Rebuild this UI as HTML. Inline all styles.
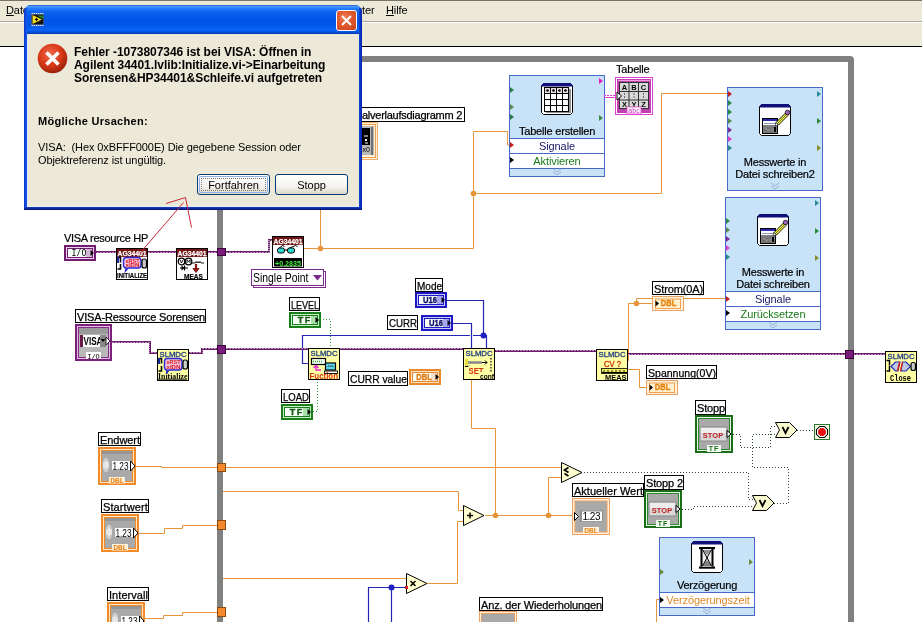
<!DOCTYPE html>
<html><head><meta charset="utf-8">
<style>
*{margin:0;padding:0;box-sizing:border-box}
html,body{width:922px;height:623px;overflow:hidden;background:#fff}
body{position:relative;will-change:transform;font-family:"Liberation Sans",sans-serif;font-size:11px;color:#000}
.a{position:absolute}
#menu{left:0;top:0;width:922px;height:22px;background:#ECE9D8;border-top:1px solid #77756a}
#menu span{position:absolute;top:3px;font-size:11px;letter-spacing:-0.1px}
#tool{left:0;top:22px;width:922px;height:25px;background:#ECE9D8;border-top:1px solid #fff;border-bottom:1px solid #000}
#tool:before{content:"";position:absolute;left:0;top:-2px;width:922px;height:1px;background:#aca899}
.lbl{position:absolute;background:#fff;border:1px solid #000;font-size:11px;line-height:12px;padding:0 1px;white-space:nowrap;letter-spacing:-0.2px;-webkit-text-stroke:0.25px #000}
.nlbl{position:absolute;font-size:11px;line-height:12px;white-space:nowrap;letter-spacing:-0.2px;-webkit-text-stroke:0.2px currentColor}
svg{position:absolute;left:0;top:0}
</style></head><body>
<div id="menu" class="a"><span style="left:6px"><u>D</u>atei</span><span style="left:338px">Fenster</span><span style="left:386px"><u>H</u>ilfe</span></div>
<div id="tool" class="a"></div>

<!-- diagram svg: loop + wires -->
<svg width="922" height="623" viewBox="0 0 922 623">
  <defs>
    <pattern id="vw" width="3" height="2" patternUnits="userSpaceOnUse"><rect x="0" y="0" width="1" height="1" fill="#6a1a6a"/><rect x="0" y="1" width="3" height="1" fill="#6a1a6a"/><rect x="1" y="0" width="2" height="1" fill="#b890b8"/></pattern>
  </defs>
  <path d="M217 622 V59 Q217 56 220 56 H850 Q854 56 854 60 V622 H848 V62 H223 V622 Z" fill="#808080"/>
  <g fill="none" stroke="#e8943a" stroke-width="1">
    <path d="M304 248.5 H473.5 M320.5 248.5 V200"/>
    <path d="M473.5 248.5 V131.5 H507.5 V145 H512"/>
    <path d="M473.5 193.5 H661.5 V93.5 H727"/>
    <path d="M628.5 361 V303.5 H652 M636.5 303.5 V298.5 H726"/>
    <path d="M628 369.5 H639.5 V387.5 H647"/>
    <path d="M136 466.5 H161.5 V467.5 H217 M223 467.5 H561"/>
    <path d="M139 533.5 H164.5 V528.5 H182.5 V525.5 H217"/>
    <path d="M223 491.5 H458.5 V510.5 H464"/>
    <path d="M144 618.5 H163.5 V615.5 H182.5 V612.5 H217"/>
    <path d="M223 578.5 H407"/>
    <path d="M427 583.5 H457.5 V521.5 H464"/>
    <path d="M485 515.5 H575"/>
    <path d="M495.5 515.5 V428.5 H471.5 V380"/>
    <path d="M548.5 515.5 V477.5 H562"/>
    <path d="M656.5 623 V599.5 H661"/>
  </g>
  <g fill="#e8943a">
    <circle cx="320.5" cy="248.5" r="2.8"/><circle cx="473.5" cy="193.5" r="2.8"/><circle cx="636.5" cy="303.5" r="2.8"/>
    <circle cx="495.5" cy="515.5" r="2.8"/><circle cx="548.5" cy="515.5" r="2.8"/>
  </g>
  <g fill="none" stroke="#2525b5" stroke-width="1.2">
    <path d="M447 300.5 H483.5 V335.5 H486.5 V348"/>
    <path d="M453 323.5 H471.5 V348"/>
    <path d="M483.5 335.5 H473 M470 335.5 H302.5 V363.5 H308"/>
    <path d="M368.5 623 V587.5 H407 M391.5 587.5 V623"/>
  </g>
  <g fill="#2020c0"><circle cx="483.5" cy="335.5" r="3"/><circle cx="391.5" cy="587.5" r="3"/></g>
  <g fill="none" stroke="#2a4a2a" stroke-width="1" stroke-dasharray="1 2">
    <path d="M581 472.5 H748.5 V499.5 H754"/>
    <path d="M682 509.5 H693.5 V506.5 H754"/>
    <path d="M733 434.5 H740.5 V447.5 H770.5 V426.5 H777"/>
    <path d="M774 503.5 H788.5 V467.5 H752.5 V434.5 H777"/>
    <path d="M797 430.5 H814"/>
  </g>
  <g fill="none" stroke="#30a030" stroke-width="1" stroke-dasharray="1 2"><path d="M320 319.5 H330.5 V348"/><path d="M313 411.5 H317.5 V380"/></g>
  <g fill="url(#vw)">
    <rect x="96" y="251" width="20" height="2"/><rect x="148" y="251" width="28" height="2"/><rect x="208" y="251" width="10" height="2"/>
    <rect x="226" y="251" width="43" height="2"/><rect x="268" y="239" width="2" height="14"/><rect x="268" y="239" width="4" height="2"/>
    <rect x="112" y="341" width="39" height="2"/><rect x="149" y="341" width="2" height="13"/><rect x="149" y="352" width="8" height="2"/>
    <rect x="189" y="352" width="14" height="2"/><rect x="201" y="348" width="2" height="6"/><rect x="201" y="348" width="17" height="2"/>
    <rect x="226" y="348" width="82" height="2"/><rect x="340" y="348" width="124" height="2"/><rect x="495" y="350" width="101" height="2"/>
    <rect x="628" y="353" width="217" height="2"/><rect x="854" y="353" width="31" height="2"/>
  </g>
  <!-- tunnels -->
  <g fill="#7a1a7a" stroke="#3a003a" stroke-width="1">
    <rect x="217.5" y="248.5" width="8" height="7"/><rect x="217.5" y="345.5" width="8" height="8"/><rect x="845.5" y="350.5" width="8" height="8"/>
  </g>
  <g fill="#f5892a" stroke="#8a4a10" stroke-width="1">
    <rect x="217.5" y="463.5" width="8" height="8"/><rect x="217.5" y="520.5" width="8" height="9"/><rect x="217.5" y="607.5" width="8" height="9"/>
  </g>
</svg>
<div class="nlbl" style="left:64px;top:232px;letter-spacing:-0.294px;font-size:11px;color:#000">VISA resource HP</div>
<svg class="a" style="left:64px;top:245px" width="32" height="16" viewBox="0 0 32 16"><rect x="0" y="0" width="32" height="16" fill="#701c70"/>
<rect x="2.5" y="2.5" width="27" height="11" fill="none" stroke="#f0d0f0"/>
<rect x="4" y="4" width="24" height="8" fill="#f8fff8"/>
<rect x="22" y="4" width="6" height="8" fill="#d8b8d8"/>
<text x="15.0" y="11.2" text-anchor="middle" font-family="Liberation Mono" font-size="10" fill="#000" textLength="15" lengthAdjust="spacingAndGlyphs">I/O</text><path d="M26.5 5.0 L30 8.0 L26.5 11.0 Z" fill="#000"/></svg>
<svg class="a" style="left:116px;top:248px" width="32" height="32" viewBox="0 0 32 32"><rect x="0.5" y="0.5" width="31" height="31" fill="#fff" stroke="#000"/><rect x="1" y="1" width="30" height="8" fill="#701414"/><text x="1.5" y="8" font-family="Liberation Sans" font-weight="bold" font-size="8" fill="#fff" stroke="#fff" stroke-width="0.25" textLength="29" lengthAdjust="spacingAndGlyphs">AG34401</text><path d="M1.5 9.5 h3 v5 M1.5 21 h3 v-5" stroke="#000" stroke-width="1.6" fill="none"/><rect x="1" y="9" width="2" height="6" fill="#1a2aa0"/>
<path d="M10 9.5 H22 Q25 9.5 25 12.5 V17 Q25 20 22 20 H12 L9.5 23 L10 20 Q7.5 20 7.5 17 V12.5 Q7.5 9.5 10 9.5 Z" fill="#f0c0e0" stroke="#2a2ad0" stroke-width="1.4"/>
<text x="16.5" y="14.5" text-anchor="middle" font-family="Liberation Sans" font-weight="bold" font-size="5.5" fill="#e02020" textLength="14" lengthAdjust="spacingAndGlyphs">xRST</text>
<text x="16.5" y="19.3" text-anchor="middle" font-family="Liberation Sans" font-weight="bold" font-size="5.5" fill="#e02020" textLength="14" lengthAdjust="spacingAndGlyphs">xIDN</text>
<rect x="26" y="11" width="4.5" height="9" rx="2" fill="#c8c8c8" stroke="#000" stroke-width="1.2"/>
<text x="1" y="30.3" font-family="Liberation Sans" font-weight="bold" font-size="8" fill="#000" stroke="#000" stroke-width="0.2" textLength="30" lengthAdjust="spacingAndGlyphs">INITIALIZE</text></svg>
<svg class="a" style="left:176px;top:248px" width="32" height="32" viewBox="0 0 32 32"><rect x="0.5" y="0.5" width="31" height="31" fill="#fff" stroke="#000"/><rect x="1" y="1" width="30" height="8" fill="#701414"/><text x="1.5" y="8" font-family="Liberation Sans" font-weight="bold" font-size="8" fill="#fff" stroke="#fff" stroke-width="0.25" textLength="29" lengthAdjust="spacingAndGlyphs">AG34401</text><circle cx="5.5" cy="13.5" r="3.3" fill="none" stroke="#000" stroke-width="1.3"/><circle cx="12.5" cy="13.5" r="3.3" fill="none" stroke="#000" stroke-width="1.3"/>
<path d="M4 11.8 L5.5 15 L7 11.8 M11 15 v-3.2 l1.5 1.8 l1.5-1.8 v3.2" stroke="#000" fill="none" stroke-width="0.9"/>
<path d="M16 15 h3 l1-1.5 l1 1.5 l1-1.5 l1 1.5 l1 -1.5 l1 1.5 h3" stroke="#000" fill="none" stroke-width="0.9"/>
<path d="M4 20 h8 M8.5 17.5 v5" stroke="#000" stroke-width="1.2"/><path d="M5.5 17.5 L8.5 20 L5.5 22.5 Z" fill="#000"/>
<path d="M20 16 v5" stroke="#8a1010" stroke-width="2.2"/><path d="M17 20.5 h6 l-3 4 Z" fill="#a01818" stroke="#600" stroke-width="0.8"/>
<text x="8" y="30.5" font-family="Liberation Sans" font-weight="bold" font-size="8" fill="#000" stroke="#000" stroke-width="0.2" textLength="19" lengthAdjust="spacingAndGlyphs">MEAS</text></svg>
<svg class="a" style="left:272px;top:236px" width="32" height="32" viewBox="0 0 32 32"><rect x="0.5" y="0.5" width="31" height="31" fill="#fff" stroke="#000"/><rect x="1" y="1" width="30" height="8" fill="#701414"/><text x="1.5" y="8" font-family="Liberation Sans" font-weight="bold" font-size="8" fill="#fff" stroke="#fff" stroke-width="0.25" textLength="29" lengthAdjust="spacingAndGlyphs">AG34401</text><path d="M6.5 12.5 L10.5 9.5 L12.5 10.5 M16.5 12.5 L23.5 9.5 L25.5 10.5" stroke="#000" stroke-width="1" fill="none"/>
<rect x="5.5" y="12" width="7" height="5" rx="2" fill="#30d8d0" stroke="#000" stroke-width="1"/><rect x="15.5" y="12" width="7" height="5" rx="2" fill="#30d8d0" stroke="#000" stroke-width="1"/><path d="M12.5 14 h3" stroke="#000"/>
<rect x="2" y="22" width="28" height="8.5" fill="#000"/>
<text x="3" y="29.5" font-family="Liberation Sans" font-weight="bold" font-size="8" fill="#40f040" textLength="26" lengthAdjust="spacingAndGlyphs">+0.2835</text></svg>
<div class="a" style="left:253px;top:271px;width:73px;height:17px;background:#fff;border:1px solid #7a2a8a"></div>
<div class="a" style="left:251px;top:269px;width:73px;height:17px;background:#fff;border:1px solid #7a2a8a;font-size:12px;line-height:17px;padding-left:1px"><span style="display:inline-block;transform:scaleX(0.8668);transform-origin:0 0">Single Point</span></div>
<svg class="a" style="left:313px;top:275px" width="9" height="6" viewBox="0 0 9 6"><path d="M0 0 H9 L4.5 5.5 Z" fill="#7a2a8a"/></svg>
<div class="lbl" style="left:75px;top:309px;width:131px;height:14px;padding-top:1px;font-size:11px;letter-spacing:-0.154px"><span style="">VISA-Ressource Sorensen</span></div>
<svg class="a" style="left:75px;top:324px" width="37" height="37" viewBox="0 0 37 37"><rect x="0" y="0" width="37" height="37" fill="#7a1f7a"/><rect x="2.5" y="2.5" width="32" height="32" fill="none" stroke="#e0c0e0"/><rect x="3" y="3" width="31" height="31" fill="#8a2a8a"/><rect x="4" y="4" width="29" height="29" fill="#b8b8b8"/><rect x="4" y="4" width="29" height="6" fill="#9a9a9a"/>
<rect x="5" y="11" width="24" height="12" fill="#fff"/><rect x="5" y="11" width="3" height="12" fill="#6a1a4a"/><text x="8.5" y="21" font-family="Liberation Sans" font-weight="bold" font-size="10" fill="#000" textLength="19" lengthAdjust="spacingAndGlyphs">VISA</text>
<rect x="25" y="11" width="6" height="12" fill="#888"/><path d="M25.5 15 h5 l-2.5 3 Z" fill="#000"/><path d="M31 13 L35 17 L31 21 Z" fill="#fff" stroke="#000" stroke-width="0.8"/>
<rect x="11" y="28" width="15" height="7" fill="#fff"/><text x="18.5" y="34.5" text-anchor="middle" font-family="Liberation Mono" font-size="7" fill="#000">I/O</text></svg>
<svg class="a" style="left:157px;top:349px" width="32" height="32" viewBox="0 0 32 32"><rect x="0.5" y="0.5" width="31" height="31" fill="#ffffa6" stroke="#000"/><text x="2.5" y="8" font-family="Liberation Sans" font-size="8" fill="#1a3a80" stroke="#1a3a80" stroke-width="0.3" textLength="27" lengthAdjust="spacingAndGlyphs">SLMDC</text><path d="M1.5 9.5 h3 v5 M1.5 22 h3 v-5" stroke="#000" stroke-width="1.6" fill="none"/><rect x="1" y="9" width="2" height="6" fill="#1a2aa0"/>
<path d="M10 9.5 H22 Q25 9.5 25 12.5 V18 Q25 21 22 21 H12 L9.5 24.5 L10 21 Q7.5 21 7.5 18 V12.5 Q7.5 9.5 10 9.5 Z" fill="#f0c0e0" stroke="#2a2ad0" stroke-width="1.4"/>
<text x="16.5" y="15" text-anchor="middle" font-family="Liberation Sans" font-weight="bold" font-size="5.5" fill="#e02020" textLength="14" lengthAdjust="spacingAndGlyphs">xRST</text>
<text x="16.5" y="20" text-anchor="middle" font-family="Liberation Sans" font-weight="bold" font-size="5.5" fill="#e02020" textLength="14" lengthAdjust="spacingAndGlyphs">xIDN</text>
<rect x="26" y="11" width="4.5" height="9" rx="2" fill="#c8d8c8" stroke="#000" stroke-width="1.2"/>
<text x="1" y="29.8" font-family="Liberation Serif" font-weight="bold" font-size="8.5" fill="#000" textLength="29.5" lengthAdjust="spacingAndGlyphs">Initialize</text><path d="M1 30.5 H30" stroke="#000" stroke-width="0.6"/></svg>
<div class="lbl" style="left:289px;top:297px;width:31px;height:14px;padding-top:1px;font-size:11px;letter-spacing:0"><span style="display:inline-block;transform:scaleX(0.8168);transform-origin:0 0">LEVEL</span></div>
<svg class="a" style="left:289px;top:312px" width="32" height="16" viewBox="0 0 32 16"><rect x="0" y="0" width="32" height="16" fill="#1a7e1a"/>
<rect x="2.5" y="2.5" width="27" height="11" fill="none" stroke="#c8f0c8"/>
<rect x="4" y="4" width="24" height="8" fill="#f8fff8"/>
<rect x="22" y="4" width="6" height="8" fill="#a8e0a8"/>
<text x="15.0" y="11.2" text-anchor="middle" font-family="Liberation Sans" font-weight="bold" font-size="9" fill="#145a14" stroke="#145a14" stroke-width="0.35" textLength="12.5" lengthAdjust="spacing">TF</text><path d="M26.5 5.0 L30 8.0 L26.5 11.0 Z" fill="#000"/></svg>
<div class="lbl" style="left:281px;top:389px;width:29px;height:14px;padding-top:1px;font-size:11px;letter-spacing:0"><span style="display:inline-block;transform:scaleX(0.8676);transform-origin:0 0">LOAD</span></div>
<svg class="a" style="left:281px;top:404px" width="32" height="16" viewBox="0 0 32 16"><rect x="0" y="0" width="32" height="16" fill="#1a7e1a"/>
<rect x="2.5" y="2.5" width="27" height="11" fill="none" stroke="#c8f0c8"/>
<rect x="4" y="4" width="24" height="8" fill="#f8fff8"/>
<rect x="22" y="4" width="6" height="8" fill="#a8e0a8"/>
<text x="15.0" y="11.2" text-anchor="middle" font-family="Liberation Sans" font-weight="bold" font-size="9" fill="#145a14" stroke="#145a14" stroke-width="0.35" textLength="12.5" lengthAdjust="spacing">TF</text><path d="M26.5 5.0 L30 8.0 L26.5 11.0 Z" fill="#000"/></svg>
<svg class="a" style="left:308px;top:348px" width="32" height="32" viewBox="0 0 32 32"><rect x="0.5" y="0.5" width="31" height="31" fill="#ffffa6" stroke="#000"/><text x="2.5" y="8" font-family="Liberation Sans" font-size="8" fill="#1a3a80" stroke="#1a3a80" stroke-width="0.3" textLength="27" lengthAdjust="spacingAndGlyphs">SLMDC</text><rect x="3.5" y="10.5" width="14" height="6" fill="#f4fff4" stroke="#000" stroke-width="1.2"/><path d="M5 13.5 h10" stroke="#30b030" stroke-width="1.5" stroke-dasharray="1 1"/>
<path d="M8 18 v4 h5" stroke="#e020d0" stroke-width="1.3" fill="none"/><path d="M5.5 20 L8 17.5 L10.5 20" stroke="#e020d0" stroke-width="1.3" fill="none"/>
<rect x="17.5" y="15" width="10" height="7" fill="#60d8f0" stroke="#000" stroke-width="1.2"/><path d="M19.5 19 l1.5-1.5 l1.5 1.5 l1.5-1.5 l1.5 1.5" stroke="#000" fill="none" stroke-width="0.7"/><rect x="16.5" y="23" width="13" height="2.5" fill="#fff" stroke="#000" stroke-width="0.9"/>
<text x="1.5" y="30.5" font-family="Liberation Sans" font-weight="bold" font-size="8.5" fill="#e03010" textLength="28.5" lengthAdjust="spacingAndGlyphs">Fuction</text></svg>
<div class="lbl" style="left:415px;top:278px;width:28px;height:14px;padding-top:1px;font-size:11px;letter-spacing:0"><span style="display:inline-block;transform:scaleX(0.9081);transform-origin:0 0">Mode</span></div>
<svg class="a" style="left:415px;top:292px" width="32" height="16" viewBox="0 0 32 16"><rect x="0" y="0" width="32" height="16" fill="#1a1ac0"/>
<rect x="2.5" y="2.5" width="27" height="11" fill="none" stroke="#c8c8ff"/>
<rect x="4" y="4" width="24" height="8" fill="#f8fff8"/>
<rect x="22" y="4" width="6" height="8" fill="#a8a8f0"/>
<text x="15.0" y="11.2" text-anchor="middle" font-family="Liberation Sans" font-weight="bold" font-size="9" fill="#10106a" stroke="#10106a" stroke-width="0.35" textLength="14" lengthAdjust="spacingAndGlyphs">U16</text><path d="M26.5 5.0 L30 8.0 L26.5 11.0 Z" fill="#000"/></svg>
<div class="lbl" style="left:387px;top:315px;width:31px;height:15px;padding-top:1px;font-size:11px;letter-spacing:0"><span style="display:inline-block;transform:scaleX(0.8819);transform-origin:0 0">CURR</span></div>
<svg class="a" style="left:421px;top:315px" width="32" height="16" viewBox="0 0 32 16"><rect x="0" y="0" width="32" height="16" fill="#1a1ac0"/>
<rect x="2.5" y="2.5" width="27" height="11" fill="none" stroke="#c8c8ff"/>
<rect x="4" y="4" width="24" height="8" fill="#f8fff8"/>
<rect x="22" y="4" width="6" height="8" fill="#a8a8f0"/>
<text x="15.0" y="11.2" text-anchor="middle" font-family="Liberation Sans" font-weight="bold" font-size="9" fill="#10106a" stroke="#10106a" stroke-width="0.35" textLength="14" lengthAdjust="spacingAndGlyphs">U16</text><path d="M26.5 5.0 L30 8.0 L26.5 11.0 Z" fill="#000"/></svg>
<div class="lbl" style="left:348px;top:371px;width:60px;height:15px;padding-top:1px;font-size:11px;letter-spacing:0"><span style="display:inline-block;transform:scaleX(0.9325);transform-origin:0 0">CURR value</span></div>
<svg class="a" style="left:409px;top:369px" width="32" height="16" viewBox="0 0 32 16"><rect x="0" y="0" width="32" height="16" fill="#e8892e"/>
<rect x="2.5" y="2.5" width="27" height="11" fill="none" stroke="#ffe0c0"/>
<rect x="4" y="4" width="24" height="8" fill="#f8fff8"/>
<rect x="22" y="4" width="6" height="8" fill="#f8e0c8"/>
<text x="15.0" y="11.2" text-anchor="middle" font-family="Liberation Sans" font-weight="bold" font-size="9" fill="#e07a10" stroke="#e07a10" stroke-width="0.35" textLength="15.5" lengthAdjust="spacingAndGlyphs">DBL</text><path d="M26.5 5.0 L30 8.0 L26.5 11.0 Z" fill="#000"/></svg>
<svg class="a" style="left:463px;top:348px" width="32" height="32" viewBox="0 0 32 32"><rect x="0.5" y="0.5" width="31" height="31" fill="#ffffa6" stroke="#000"/><text x="2.5" y="8" font-family="Liberation Sans" font-size="8" fill="#1a3a80" stroke="#1a3a80" stroke-width="0.3" textLength="27" lengthAdjust="spacingAndGlyphs">SLMDC</text><rect x="2" y="11" width="3" height="7" fill="#e8e040"/><path d="M2 18.5 h3 l1 -1" stroke="#000" fill="none"/><path d="M5 14.5 h14" stroke="#888" stroke-width="2.5"/><path d="M19 14.5 h5 M22 12.5 l2 2 l-2 2" stroke="#000" stroke-width="1" fill="none"/><path d="M28 10 v14" stroke="#000" stroke-width="1.2" stroke-dasharray="1.5 1.5"/>
<text x="5.5" y="26" font-family="Liberation Sans" font-weight="bold" font-size="9.5" fill="#d03010" textLength="15" lengthAdjust="spacingAndGlyphs">SET</text>
<rect x="17" y="24" width="14" height="7" fill="#ffffa6"/><text x="17" y="30.5" font-family="Liberation Sans" font-weight="bold" font-size="7.5" fill="#000" textLength="14" lengthAdjust="spacingAndGlyphs">conf</text></svg>
<div class="lbl" style="left:300px;top:107px;width:165px;height:15px;padding-top:1px;text-align:right;padding-right:2px;letter-spacing:-0.259px">Signalverlaufsdiagramm 2</div>
<svg class="a" style="left:340px;top:122px" width="38" height="38" viewBox="0 0 38 38"><rect x="0.5" y="0.5" width="37" height="37" fill="#fff0d8" stroke="#f0b070"/><rect x="2.5" y="2.5" width="33" height="33" fill="#fff0d8" stroke="#f0a050"/><rect x="4" y="4" width="30" height="29" fill="#b8b8b8"/><rect x="31" y="5" width="2" height="28" fill="#707070"/><rect x="4" y="6" width="26" height="17" fill="#000"/><path d="M24 14 h4 M25 17 l2 2 M27 17 l-2 2 M25 21 h3" stroke="#fff" stroke-width="1"/><text x="30" y="30" font-size="7" font-family="Liberation Sans" text-anchor="end" fill="#000">x0</text></svg>
<div class="a" style="left:509px;top:75px;width:96px;height:102px;background:#c8e2f8;border:1px solid #4a68c8"></div>
<div class="a" style="left:509px;top:138px;width:96px;height:16px;background:#fff;border:1px solid #4a68c8;text-align:center;font-size:11px;line-height:14px;color:#1a1a6a;letter-spacing:-0.1px">Signale</div>
<div class="a" style="left:509px;top:153px;width:96px;height:16px;background:#fff;border:1px solid #4a68c8;text-align:center;font-size:11px;line-height:14px;color:#1a7a1a;letter-spacing:-0.1px">Aktivieren</div>
<svg class="a" style="left:551px;top:168px" width="12" height="8" viewBox="0 0 12 8"><path d="M2 1 L6 4 L10 1 M2 4 L6 7 L10 4" stroke="#9ab0d0" fill="none"/></svg>
<svg class="a" style="left:510px;top:87px" width="4" height="6"><path d="M0 0 L4 3 L0 6 Z" fill="#2a7a4a"/></svg>
<svg class="a" style="left:510px;top:104px" width="4" height="6"><path d="M0 0 L4 3 L0 6 Z" fill="#5a8a4a"/></svg>
<svg class="a" style="left:510px;top:114px" width="4" height="6"><path d="M0 0 L4 3 L0 6 Z" fill="#2a7a4a"/></svg>
<svg class="a" style="left:510px;top:142px" width="4" height="6"><path d="M0 0 L4 3 L0 6 Z" fill="#c02020"/></svg>
<svg class="a" style="left:510px;top:157px" width="4" height="6"><path d="M0 0 L4 3 L0 6 Z" fill="#000"/></svg>
<svg class="a" style="left:599px;top:78px" width="4" height="6"><path d="M0 0 L4 3 L0 6 Z" fill="#e020c0"/></svg>
<svg class="a" style="left:599px;top:115px" width="4" height="6"><path d="M0 0 L4 3 L0 6 Z" fill="#3a8a3a"/></svg>
<svg class="a" style="left:541px;top:83px" width="32" height="32" viewBox="0 0 32 32"><path d="M2.5 0.5 H29.5 L31.5 2.5 V29.5 L29.5 31.5 H2.5 L0.5 29.5 V2.5 Z" fill="#fff" stroke="#000" stroke-width="1"/><path d="M2.5 0.5 H29.5 L31 2 V3 H1 V2 Z" fill="#10107a" stroke="#10107a"/><rect x="5" y="6" width="25" height="24" fill="#909090"/><rect x="3" y="4" width="25" height="25" fill="#000"/><rect x="4" y="5" width="5" height="5" fill="#ece4e4"/><rect x="10" y="5" width="5" height="5" fill="#ece4e4"/><rect x="16" y="5" width="5" height="5" fill="#ece4e4"/><rect x="22" y="5" width="5" height="5" fill="#ece4e4"/><rect x="4" y="11" width="5" height="5" fill="#fff"/><rect x="10" y="11" width="5" height="5" fill="#fff"/><rect x="16" y="11" width="5" height="5" fill="#fff"/><rect x="22" y="11" width="5" height="5" fill="#fff"/><rect x="4" y="17" width="5" height="5" fill="#fff"/><rect x="10" y="17" width="5" height="5" fill="#fff"/><rect x="16" y="17" width="5" height="5" fill="#fff"/><rect x="22" y="17" width="5" height="5" fill="#fff"/><rect x="4" y="23" width="5" height="5" fill="#fff"/><rect x="10" y="23" width="5" height="5" fill="#fff"/><rect x="16" y="23" width="5" height="5" fill="#fff"/><rect x="22" y="23" width="5" height="5" fill="#fff"/><circle cx="6.5" cy="7.5" r="1.3" fill="#000"/><circle cx="12.5" cy="7.5" r="1.3" fill="#000"/><circle cx="18.5" cy="7.5" r="1.3" fill="#000"/><circle cx="24.5" cy="7.5" r="1.3" fill="#000"/></svg>
<div class="nlbl" style="left:509px;top:125px;width:96px;text-align:center;letter-spacing:-0.2px">Tabelle erstellen</div>
<div class="nlbl" style="left:616px;top:63px;letter-spacing:-0.2px;font-size:11px;color:#000">Tabelle</div>
<svg class="a" style="left:615px;top:77px" width="38" height="38" viewBox="0 0 38 38"><rect x="0.5" y="0.5" width="37" height="37" fill="#fff" stroke="#e040d0"/><rect x="2" y="2" width="34" height="34" fill="#c040b0"/><rect x="3" y="3" width="32" height="1" fill="#f0a0e0"/><rect x="4" y="5" width="30" height="27" fill="#303030"/>
<g fill="#d8d8d8"><rect x="5" y="6" width="8.5" height="8"/><rect x="14.5" y="6" width="8.5" height="8"/><rect x="24" y="6" width="9" height="8"/><rect x="5" y="15" width="8.5" height="7.5"/><rect x="14.5" y="15" width="8.5" height="7.5"/><rect x="24" y="15" width="9" height="7.5"/><rect x="5" y="23.5" width="8.5" height="7.5"/><rect x="14.5" y="23.5" width="8.5" height="7.5"/><rect x="24" y="23.5" width="9" height="7.5"/></g>
<g font-family="Liberation Sans" font-weight="bold" font-size="7.5" text-anchor="middle" fill="#000"><text x="9.5" y="12.5">A</text><text x="19" y="12.5">B</text><text x="28.5" y="12.5">C</text><text x="9.5" y="30">X</text><text x="19" y="30">Y</text><text x="28.5" y="30">Z</text></g>
<g fill="#000"><rect x="9" y="16.5" width="1" height="1"/><rect x="9" y="19.5" width="1" height="1"/><rect x="18.5" y="16.5" width="1" height="1"/><rect x="18.5" y="19.5" width="1" height="1"/><rect x="28" y="16.5" width="1" height="1"/><rect x="28" y="19.5" width="1" height="1"/></g>
<rect x="12" y="30" width="14" height="7" fill="#fff" stroke="#e040d0" stroke-width="0.8"/><text x="19" y="36" text-anchor="middle" font-family="Liberation Sans" font-size="7" fill="#d030c0">abc</text>
<path d="M2 15 L6.5 19 L2 23 Z" fill="#fff" stroke="#000" stroke-width="1"/></svg>
<svg class="a" style="left:604px;top:95px" width="12" height="3" viewBox="0 0 12 3"><path d="M0 2.5 H12" stroke="#e040d0" stroke-width="1"/><path d="M0 0.5 H12" stroke="#e040d0" stroke-width="1" stroke-dasharray="2 1"/></svg>
<div class="a" style="left:727px;top:87px;width:96px;height:104px;background:#c8e2f8;border:1px solid #4a68c8"></div>
<svg class="a" style="left:769px;top:182px" width="12" height="8" viewBox="0 0 12 8"><path d="M2 1 L6 4 L10 1 M2 4 L6 7 L10 4" stroke="#9ab0d0" fill="none"/></svg>
<svg class="a" style="left:728px;top:90.5px" width="4" height="6"><path d="M0 0 L4 3 L0 6 Z" fill="#c02020"/></svg>
<svg class="a" style="left:728px;top:99.5px" width="4" height="6"><path d="M0 0 L4 3 L0 6 Z" fill="#2a8a4a"/></svg>
<svg class="a" style="left:728px;top:108.5px" width="4" height="6"><path d="M0 0 L4 3 L0 6 Z" fill="#2a8a4a"/></svg>
<svg class="a" style="left:728px;top:117.5px" width="4" height="6"><path d="M0 0 L4 3 L0 6 Z" fill="#5a8a4a"/></svg>
<svg class="a" style="left:728px;top:126.5px" width="4" height="6"><path d="M0 0 L4 3 L0 6 Z" fill="#7a2a9a"/></svg>
<svg class="a" style="left:728px;top:135.5px" width="4" height="6"><path d="M0 0 L4 3 L0 6 Z" fill="#e040d0"/></svg>
<svg class="a" style="left:728px;top:144.5px" width="4" height="6"><path d="M0 0 L4 3 L0 6 Z" fill="#2a8a8a"/></svg>
<svg class="a" style="left:817px;top:90.5px" width="4" height="6"><path d="M0 0 L4 3 L0 6 Z" fill="#2a8a9a"/></svg>
<svg class="a" style="left:817px;top:117.5px" width="4" height="6"><path d="M0 0 L4 3 L0 6 Z" fill="#2a8a3a"/></svg>
<svg class="a" style="left:817px;top:144.5px" width="4" height="6"><path d="M0 0 L4 3 L0 6 Z" fill="#8a8a2a"/></svg>
<svg class="a" style="left:759px;top:104px" width="32" height="32" viewBox="0 0 32 32"><path d="M2.5 0.5 H29.5 L31.5 2.5 V29.5 L29.5 31.5 H2.5 L0.5 29.5 V2.5 Z" fill="#fff" stroke="#000" stroke-width="1"/><path d="M2.5 0.5 H29.5 L31 2 V3 H1 V2 Z" fill="#10107a" stroke="#10107a"/><rect x="3.5" y="14.5" width="15" height="15" fill="#fff" stroke="#000" stroke-width="1"/><rect x="4" y="15" width="14" height="2" fill="#2a2ab0"/><path d="M5 19.5 h12" stroke="#7080a0" stroke-width="0.8"/>
<rect x="4" y="21" width="14" height="8" fill="#808080"/><text x="4.5" y="28" font-family="Liberation Sans" font-weight="bold" font-size="6" fill="#fff" stroke="#333" stroke-width="0.4" textLength="10" lengthAdjust="spacingAndGlyphs">ASCII</text><rect x="15" y="23" width="2" height="5" fill="#000"/>
<path d="M17 18.5 L26.5 9 L29 11.5 L19.5 21 Z" fill="#f0f040" stroke="#000" stroke-width="0.9"/><path d="M18.5 19.5 L27.5 10.5" stroke="#000" stroke-width="0.5"/>
<circle cx="28.5" cy="8.5" r="2.3" fill="#a060c0" stroke="#000" stroke-width="0.7"/><path d="M17 18.5 L16 22 L19.5 21 Z" fill="#fff" stroke="#000" stroke-width="0.6"/></svg>
<div class="nlbl" style="left:727px;top:155.5px;width:96px;text-align:center;line-height:12.7px;letter-spacing:-0.2px">Messwerte in<br>Datei schreiben2</div>
<div class="a" style="left:725px;top:197px;width:96px;height:133px;background:#c8e2f8;border:1px solid #4a68c8"></div>
<div class="a" style="left:725px;top:291px;width:96px;height:16px;background:#fff;border:1px solid #4a68c8;text-align:center;font-size:11px;line-height:14px;color:#1a1a6a;letter-spacing:-0.1px">Signale</div>
<div class="a" style="left:725px;top:306px;width:96px;height:16px;background:#fff;border:1px solid #4a68c8;text-align:center;font-size:11px;line-height:14px;color:#1a7a1a;letter-spacing:-0.1px">Zurücksetzen</div>
<svg class="a" style="left:767px;top:321px" width="12" height="8" viewBox="0 0 12 8"><path d="M2 1 L6 4 L10 1 M2 4 L6 7 L10 4" stroke="#9ab0d0" fill="none"/></svg>
<svg class="a" style="left:726px;top:218px" width="4" height="6"><path d="M0 0 L4 3 L0 6 Z" fill="#2a8a4a"/></svg>
<svg class="a" style="left:726px;top:227px" width="4" height="6"><path d="M0 0 L4 3 L0 6 Z" fill="#5a8a4a"/></svg>
<svg class="a" style="left:726px;top:236px" width="4" height="6"><path d="M0 0 L4 3 L0 6 Z" fill="#7a2a9a"/></svg>
<svg class="a" style="left:726px;top:245px" width="4" height="6"><path d="M0 0 L4 3 L0 6 Z" fill="#e040d0"/></svg>
<svg class="a" style="left:726px;top:254px" width="4" height="6"><path d="M0 0 L4 3 L0 6 Z" fill="#2a8a8a"/></svg>
<svg class="a" style="left:726px;top:295.5px" width="4" height="6"><path d="M0 0 L4 3 L0 6 Z" fill="#c02020"/></svg>
<svg class="a" style="left:726px;top:310px" width="4" height="6"><path d="M0 0 L4 3 L0 6 Z" fill="#000"/></svg>
<svg class="a" style="left:815px;top:200px" width="4" height="6"><path d="M0 0 L4 3 L0 6 Z" fill="#2a8a9a"/></svg>
<svg class="a" style="left:815px;top:227.5px" width="4" height="6"><path d="M0 0 L4 3 L0 6 Z" fill="#2a8a3a"/></svg>
<svg class="a" style="left:815px;top:254.5px" width="4" height="6"><path d="M0 0 L4 3 L0 6 Z" fill="#8a8a2a"/></svg>
<svg class="a" style="left:757px;top:214px" width="32" height="32" viewBox="0 0 32 32"><path d="M2.5 0.5 H29.5 L31.5 2.5 V29.5 L29.5 31.5 H2.5 L0.5 29.5 V2.5 Z" fill="#fff" stroke="#000" stroke-width="1"/><path d="M2.5 0.5 H29.5 L31 2 V3 H1 V2 Z" fill="#10107a" stroke="#10107a"/><rect x="3.5" y="14.5" width="15" height="15" fill="#fff" stroke="#000" stroke-width="1"/><rect x="4" y="15" width="14" height="2" fill="#2a2ab0"/><path d="M5 19.5 h12" stroke="#7080a0" stroke-width="0.8"/>
<rect x="4" y="21" width="14" height="8" fill="#808080"/><text x="4.5" y="28" font-family="Liberation Sans" font-weight="bold" font-size="6" fill="#fff" stroke="#333" stroke-width="0.4" textLength="10" lengthAdjust="spacingAndGlyphs">ASCII</text><rect x="15" y="23" width="2" height="5" fill="#000"/>
<path d="M17 18.5 L26.5 9 L29 11.5 L19.5 21 Z" fill="#f0f040" stroke="#000" stroke-width="0.9"/><path d="M18.5 19.5 L27.5 10.5" stroke="#000" stroke-width="0.5"/>
<circle cx="28.5" cy="8.5" r="2.3" fill="#a060c0" stroke="#000" stroke-width="0.7"/><path d="M17 18.5 L16 22 L19.5 21 Z" fill="#fff" stroke="#000" stroke-width="0.6"/></svg>
<div class="nlbl" style="left:725px;top:265.5px;width:96px;text-align:center;line-height:12.7px;letter-spacing:-0.2px">Messwerte in<br>Datei schreiben</div>
<div class="lbl" style="left:652px;top:281px;width:52px;height:14px;padding-top:1px;font-size:11px;letter-spacing:-0.125px"><span style="">Strom(0A)</span></div>
<svg class="a" style="left:652px;top:296px" width="32" height="15" viewBox="0 0 32 15"><rect x="0.5" y="0.5" width="31" height="14" fill="#fff2dc" stroke="#e8a060"/>
<rect x="3.5" y="3" width="25" height="9.5" fill="#fff0d0" stroke="#f0a050"/>
<text x="16.5" y="10.3" text-anchor="middle" font-family="Liberation Sans" font-weight="bold" font-size="9" fill="#e8820a" stroke="#e8820a" stroke-width="0.3" textLength="15.5" lengthAdjust="spacingAndGlyphs">DBL</text><path d="M3.5 4.5 L7 7.5 L3.5 10.5 Z" fill="#000"/></svg>
<svg class="a" style="left:596px;top:349px" width="32" height="32" viewBox="0 0 32 32"><rect x="0.5" y="0.5" width="31" height="31" fill="#ffffa6" stroke="#000"/><text x="2.5" y="8" font-family="Liberation Sans" font-size="8" fill="#1a3a80" stroke="#1a3a80" stroke-width="0.3" textLength="27" lengthAdjust="spacingAndGlyphs">SLMDC</text><text x="16.5" y="17.5" text-anchor="middle" font-family="Liberation Sans" font-size="8.5" fill="#d03010" stroke="#d03010" stroke-width="0.3" textLength="17" lengthAdjust="spacingAndGlyphs">CV ?</text>
<rect x="5.5" y="19.5" width="26" height="5" fill="#f0f060" stroke="#000" stroke-width="0.8"/><path d="M6 23.5 h25" stroke="#000" stroke-width="1"/><path d="M8 21 v2 M12 21 v2 M16 21 v2 M20 21 v2 M24 21 v2 M28 21 v2" stroke="#000" stroke-width="0.8"/>
<text x="9" y="31" font-family="Liberation Sans" font-weight="bold" font-size="8" fill="#000" textLength="21.5" lengthAdjust="spacingAndGlyphs">MEAS</text></svg>
<div class="lbl" style="left:646px;top:365px;width:71px;height:14px;padding-top:1px;font-size:11px;letter-spacing:0"><span style="display:inline-block;transform:scaleX(0.9577);transform-origin:0 0">Spannung(0V)</span></div>
<svg class="a" style="left:646px;top:380px" width="32" height="15" viewBox="0 0 32 15"><rect x="0.5" y="0.5" width="31" height="14" fill="#fff2dc" stroke="#e8a060"/>
<rect x="3.5" y="3" width="25" height="9.5" fill="#fff0d0" stroke="#f0a050"/>
<text x="16.5" y="10.3" text-anchor="middle" font-family="Liberation Sans" font-weight="bold" font-size="9" fill="#e8820a" stroke="#e8820a" stroke-width="0.3" textLength="15.5" lengthAdjust="spacingAndGlyphs">DBL</text><path d="M3.5 4.5 L7 7.5 L3.5 10.5 Z" fill="#000"/></svg>
<div class="lbl" style="left:695px;top:400px;width:31px;height:15px;padding-top:1px;font-size:11px;letter-spacing:-0.156px"><span style="">Stopp</span></div>
<svg class="a" style="left:695px;top:415px" width="38" height="38" viewBox="0 0 38 38"><rect x="0" y="0" width="38" height="38" fill="#1a6e1a"/>
<rect x="2.5" y="2.5" width="33" height="33" fill="none" stroke="#e8f4e8"/>
<rect x="3" y="3" width="32" height="32" fill="#2a8a2a"/>
<rect x="4" y="4" width="30" height="30" fill="#a9a9a9"/>
<rect x="5" y="12" width="27" height="14" fill="#d8d8d8" stroke="#8a8a8a" stroke-width="1"/>
<rect x="6" y="13" width="25" height="5" fill="#eeeeee"/>
<text x="18.0" y="22.5" text-anchor="middle" font-family="Liberation Sans" font-weight="bold" font-size="7.5" fill="#c02020">STOP</text>
<path d="M32 15.5 L36 19 L32 22.5 Z" fill="#fff" stroke="#000" stroke-width="1"/>
<rect x="12.0" y="30" width="14" height="7" fill="#f2faf2"/>
<text x="19.0" y="36" text-anchor="middle" font-family="Liberation Sans" font-weight="bold" font-size="7" fill="#1a6a1a" letter-spacing="1">TF</text></svg>
<svg class="a" style="left:775px;top:422px" width="23" height="16" viewBox="0 0 23 16"><path d="M0.5 0.5 H14.5 L22 8 L14.5 15.5 H0.5 L4.5 8 Z" fill="#fafad0" stroke="#000" stroke-width="1" stroke-linejoin="miter"/><path d="M7.5 5 L10.5 11 L13.5 5" stroke="#000" stroke-width="1.8" fill="none"/></svg>
<svg class="a" style="left:752px;top:495px" width="23" height="16" viewBox="0 0 23 16"><path d="M0.5 0.5 H14.5 L22 8 L14.5 15.5 H0.5 L4.5 8 Z" fill="#fafad0" stroke="#000" stroke-width="1" stroke-linejoin="miter"/><path d="M7.5 5 L10.5 11 L13.5 5" stroke="#000" stroke-width="1.8" fill="none"/></svg>
<svg class="a" style="left:814px;top:424px" width="16" height="16" viewBox="0 0 16 16"><rect x="0.5" y="0.5" width="15" height="15" fill="#f4fce8" stroke="#2a7a2a"/><polygon points="13.54,10.30 10.30,13.54 5.70,13.54 2.46,10.30 2.46,5.70 5.70,2.46 10.30,2.46 13.54,5.70" fill="#fff" stroke="#000" stroke-width="1.1"/><polygon points="11.88,9.61 9.61,11.88 6.39,11.88 4.12,9.61 4.12,6.39 6.39,4.12 9.61,4.12 11.88,6.39" fill="#e81010"/></svg>
<svg class="a" style="left:885px;top:351px" width="32" height="32" viewBox="0 0 32 32"><rect x="0.5" y="0.5" width="31" height="31" fill="#ffffa6" stroke="#000"/><text x="2.5" y="8" font-family="Liberation Sans" font-size="8" fill="#1a3a80" stroke="#1a3a80" stroke-width="0.3" textLength="27" lengthAdjust="spacingAndGlyphs">SLMDC</text><path d="M1.5 9.5 h3 v5 M1.5 20 h3 v-5" stroke="#000" stroke-width="1.5" fill="none"/>
<path d="M6 15.5 L10.5 11 H15 L13 20 H10.5 Z" fill="#c0c8e8" stroke="#1a2ab0" stroke-width="1.1"/><path d="M25.5 15.5 L21 11 H17.5 L16 20 H21 Z" fill="#c0c8e8" stroke="#1a2ab0" stroke-width="1.1"/>
<path d="M14.5 11 L12.5 20 M17.5 11 L15.5 20" stroke="#e02010" stroke-width="1.3"/>
<rect x="26" y="11.5" width="4.5" height="8" rx="2" fill="#c8c8c8" stroke="#000" stroke-width="1.2"/>
<text x="5" y="29.5" font-family="Liberation Mono" font-weight="bold" font-size="8.5" fill="#000" textLength="21" lengthAdjust="spacingAndGlyphs">Close</text></svg>
<div class="lbl" style="left:98px;top:432px;width:43px;height:14px;padding-top:1px;font-size:11px;letter-spacing:-0.054px"><span style="">Endwert</span></div>
<svg class="a" style="left:98px;top:447px" width="38" height="38" viewBox="0 0 38 38"><rect x="0" y="0" width="38" height="38" fill="#f08a2a"/>
<rect x="2.5" y="2.5" width="33" height="33" fill="none" stroke="#ffe6c0" stroke-width="1"/>
<rect x="3" y="3" width="32" height="32" fill="#f08a2a"/>
<rect x="4" y="4" width="30" height="30" fill="#a9a9a9"/>
<rect x="4" y="4" width="30" height="3" fill="#959595"/>
<ellipse cx="8" cy="18.0" rx="3" ry="7" fill="#e8e8e8"/><path d="M6 15.0 L8 12.0 L10 15.0 M6 21.0 L8 24.0 L10 21.0" stroke="#bbb" fill="none"/>
<rect x="14" y="14.0" width="18" height="9" fill="#fff"/>
<text x="14.5" y="22.5" font-family="Liberation Sans" font-size="10.5" fill="#000" textLength="16" lengthAdjust="spacingAndGlyphs">1.23</text>
<path d="M32.5 14.0 L37 19.0 L32.5 24.0 Z" fill="#fff" stroke="#000" stroke-width="1"/><rect x="11.0" y="30" width="16" height="6.5" fill="#fff2dc"/>
<text x="19.0" y="36" text-anchor="middle" font-family="Liberation Sans" font-weight="bold" font-size="7.5" fill="#ee8a20" stroke="#ee8a20" stroke-width="0.2" textLength="13" lengthAdjust="spacingAndGlyphs">DBL</text></svg>
<div class="lbl" style="left:101px;top:499px;width:48px;height:14px;padding-top:1px;font-size:11px;letter-spacing:0.108px"><span style="">Startwert</span></div>
<svg class="a" style="left:101px;top:514px" width="38" height="38" viewBox="0 0 38 38"><rect x="0" y="0" width="38" height="38" fill="#f08a2a"/>
<rect x="2.5" y="2.5" width="33" height="33" fill="none" stroke="#ffe6c0" stroke-width="1"/>
<rect x="3" y="3" width="32" height="32" fill="#f08a2a"/>
<rect x="4" y="4" width="30" height="30" fill="#a9a9a9"/>
<rect x="4" y="4" width="30" height="3" fill="#959595"/>
<ellipse cx="8" cy="18.0" rx="3" ry="7" fill="#e8e8e8"/><path d="M6 15.0 L8 12.0 L10 15.0 M6 21.0 L8 24.0 L10 21.0" stroke="#bbb" fill="none"/>
<rect x="14" y="14.0" width="18" height="9" fill="#fff"/>
<text x="14.5" y="22.5" font-family="Liberation Sans" font-size="10.5" fill="#000" textLength="16" lengthAdjust="spacingAndGlyphs">1.23</text>
<path d="M32.5 14.0 L37 19.0 L32.5 24.0 Z" fill="#fff" stroke="#000" stroke-width="1"/><rect x="11.0" y="30" width="16" height="6.5" fill="#fff2dc"/>
<text x="19.0" y="36" text-anchor="middle" font-family="Liberation Sans" font-weight="bold" font-size="7.5" fill="#ee8a20" stroke="#ee8a20" stroke-width="0.2" textLength="13" lengthAdjust="spacingAndGlyphs">DBL</text></svg>
<div class="lbl" style="left:107px;top:587px;width:42px;height:14px;padding-top:1px;font-size:11px;letter-spacing:0.052px"><span style="">Intervall</span></div>
<svg class="a" style="left:107px;top:602px" width="38" height="38" viewBox="0 0 38 38"><rect x="0" y="0" width="38" height="38" fill="#f08a2a"/>
<rect x="2.5" y="2.5" width="33" height="33" fill="none" stroke="#ffe6c0" stroke-width="1"/>
<rect x="3" y="3" width="32" height="32" fill="#f08a2a"/>
<rect x="4" y="4" width="30" height="30" fill="#a9a9a9"/>
<rect x="4" y="4" width="30" height="3" fill="#959595"/>
<ellipse cx="8" cy="18.0" rx="3" ry="7" fill="#e8e8e8"/><path d="M6 15.0 L8 12.0 L10 15.0 M6 21.0 L8 24.0 L10 21.0" stroke="#bbb" fill="none"/>
<rect x="14" y="14.0" width="18" height="9" fill="#fff"/>
<text x="14.5" y="22.5" font-family="Liberation Sans" font-size="10.5" fill="#000" textLength="16" lengthAdjust="spacingAndGlyphs">1.23</text>
<path d="M32.5 14.0 L37 19.0 L32.5 24.0 Z" fill="#fff" stroke="#000" stroke-width="1"/><rect x="11.0" y="30" width="16" height="6.5" fill="#fff2dc"/>
<text x="19.0" y="36" text-anchor="middle" font-family="Liberation Sans" font-weight="bold" font-size="7.5" fill="#ee8a20" stroke="#ee8a20" stroke-width="0.2" textLength="13" lengthAdjust="spacingAndGlyphs">DBL</text></svg>
<svg class="a" style="left:463px;top:505px" width="22" height="21" viewBox="0 0 22 21"><path d="M0.5 0.5 L21 10.5 L0.5 20.5 Z" fill="#ffffd0" stroke="#000" stroke-width="1"/><path d="M4 10.5 h6 M7 7.5 v6" stroke="#000" stroke-width="1.5"/></svg>
<svg class="a" style="left:406px;top:573px" width="22" height="21" viewBox="0 0 22 21"><path d="M0.5 0.5 L21 10.5 L0.5 20.5 Z" fill="#ffffd0" stroke="#000" stroke-width="1"/><path d="M4.5 8 L9.5 13 M9.5 8 L4.5 13" stroke="#000" stroke-width="1.5"/></svg>
<div class="a" style="left:405px;top:586px;width:3px;height:3px;background:#e02020"></div>
<svg class="a" style="left:561px;top:462px" width="22" height="21" viewBox="0 0 22 21"><path d="M0.5 0.5 L21 10.5 L0.5 20.5 Z" fill="#ffffd0" stroke="#000" stroke-width="1"/><path d="M7.5 5.5 L3.5 8 L7.5 10.5 M3.5 11.5 L7.5 14" stroke="#000" stroke-width="1.7" fill="none"/></svg>
<div class="lbl" style="left:572px;top:483px;width:72px;height:14px;padding-top:1px;font-size:11px;letter-spacing:0.008px"><span style="">Aktueller Wert</span></div>
<svg class="a" style="left:572px;top:498px" width="38" height="37" viewBox="0 0 38 37"><rect x="0.5" y="0.5" width="37" height="36" fill="#fff0dc" stroke="#f0a060"/>
<rect x="2.5" y="2.5" width="33" height="32" fill="#e8a060"/>
<rect x="3.5" y="3.5" width="31" height="30" fill="#a9a9a9"/>
<rect x="8" y="12.5" width="23" height="11" fill="#8f8f8f"/>
<rect x="10" y="13.5" width="20" height="9.5" fill="#fff"/>
<text x="10.5" y="21.5" font-family="Liberation Sans" font-size="10" letter-spacing="-0.5" fill="#000">1.23</text>
<path d="M2.5 14.5 L6.5 18.5 L2.5 22.5 Z" fill="#fff" stroke="#000" stroke-width="1"/><rect x="11.0" y="29" width="16" height="6.5" fill="#fff2dc"/>
<text x="19.0" y="35" text-anchor="middle" font-family="Liberation Sans" font-weight="bold" font-size="7.5" fill="#ee8a20" stroke="#ee8a20" stroke-width="0.2" textLength="13" lengthAdjust="spacingAndGlyphs">DBL</text></svg>
<div class="lbl" style="left:644px;top:475px;width:40px;height:15px;padding-top:1px;font-size:11px;letter-spacing:-0.138px"><span style="">Stopp 2</span></div>
<svg class="a" style="left:644px;top:490px" width="38" height="38" viewBox="0 0 38 38"><rect x="0" y="0" width="38" height="38" fill="#1a6e1a"/>
<rect x="2.5" y="2.5" width="33" height="33" fill="none" stroke="#e8f4e8"/>
<rect x="3" y="3" width="32" height="32" fill="#2a8a2a"/>
<rect x="4" y="4" width="30" height="30" fill="#a9a9a9"/>
<rect x="5" y="12" width="27" height="14" fill="#d8d8d8" stroke="#8a8a8a" stroke-width="1"/>
<rect x="6" y="13" width="25" height="5" fill="#eeeeee"/>
<text x="18.0" y="22.5" text-anchor="middle" font-family="Liberation Sans" font-weight="bold" font-size="7.5" fill="#c02020">STOP</text>
<path d="M32 15.5 L36 19 L32 22.5 Z" fill="#fff" stroke="#000" stroke-width="1"/>
<rect x="12.0" y="30" width="14" height="7" fill="#f2faf2"/>
<text x="19.0" y="36" text-anchor="middle" font-family="Liberation Sans" font-weight="bold" font-size="7" fill="#1a6a1a" letter-spacing="1">TF</text></svg>
<div class="a" style="left:659px;top:537px;width:96px;height:79px;background:#c8e2f8;border:1px solid #4a68c8"></div>
<div class="a" style="left:659px;top:592px;width:96px;height:16px;background:#fff;border:1px solid #4a68c8;text-align:center;font-size:11px;line-height:14px;color:#e08a2a;letter-spacing:-0.1px"><span style="position:relative;left:1px">Verzögerungszeit</span></div>
<svg class="a" style="left:701px;top:607px" width="12" height="8" viewBox="0 0 12 8"><path d="M2 1 L6 4 L10 1 M2 4 L6 7 L10 4" stroke="#9ab0d0" fill="none"/></svg>
<svg class="a" style="left:660px;top:569px" width="4" height="6"><path d="M0 0 L4 3 L0 6 Z" fill="#6a8a3a"/></svg>
<svg class="a" style="left:660px;top:596.5px" width="4" height="6"><path d="M0 0 L4 3 L0 6 Z" fill="#000"/></svg>
<svg class="a" style="left:749px;top:558.5px" width="4" height="6"><path d="M0 0 L4 3 L0 6 Z" fill="#6a8a3a"/></svg>
<svg class="a" style="left:691px;top:541px" width="32" height="32" viewBox="0 0 32 32"><path d="M2.5 0.5 H29.5 L31.5 2.5 V29.5 L29.5 31.5 H2.5 L0.5 29.5 V2.5 Z" fill="#fff" stroke="#000" stroke-width="1"/><path d="M2.5 0.5 H29.5 L31 2 V3 H1 V2 Z" fill="#10107a" stroke="#10107a"/><rect x="8" y="6" width="16" height="2.2" fill="#000"/><rect x="8" y="25.5" width="16" height="2.2" fill="#000"/>
<rect x="10" y="8" width="12" height="17.5" fill="#f0f0f0"/><path d="M12 9 L16 14 L20 9 Z" fill="#909090"/><path d="M16 19 L20.5 25 H11.5 Z" fill="#808080"/>
<path d="M11.5 8.5 L20.5 25 M20.5 8.5 L11.5 25" stroke="#000" stroke-width="1"/>
<rect x="9.5" y="8" width="2" height="17.5" fill="#000"/><rect x="20.5" y="8" width="2" height="17.5" fill="#000"/></svg>
<div class="nlbl" style="left:659px;top:579px;width:96px;text-align:center;letter-spacing:-0.2px">Verzögerung</div>
<div class="lbl" style="left:479px;top:597px;width:124px;height:14px;padding-top:1px;font-size:11px;letter-spacing:-0.14px"><span style="">Anz. der Wiederholungen</span></div>
<svg class="a" style="left:479px;top:611px" width="38" height="12" viewBox="0 0 38 12"><rect x="0.5" y="0.5" width="37" height="14" fill="#fff0dc" stroke="#f0a060"/><rect x="2.5" y="2.5" width="33" height="12" fill="#a9a9a9" stroke="#e8a060"/></svg>
<!-- dialog -->
<div id="dlg" class="a" style="left:24px;top:5px;width:338px;height:205px;background:#0a3fd0;border-radius:7px 7px 0 0;overflow:hidden">
  <div class="a" style="left:0;top:0;width:338px;height:29px;border-radius:7px 7px 0 0;background:linear-gradient(#2050c0 0px,#4a9cff 1.5px,#2a80ff 3px,#0a62f0 7px,#0055e5 14px,#0056e8 20px,#0a64f6 25px,#0452dc 27px,#0a36b0 29px)"></div>
  <div class="a" style="left:0;top:3px;width:3px;height:202px;background:linear-gradient(90deg,#0838c8,#1858f0)"></div>
  <div class="a" style="left:335px;top:3px;width:3px;height:202px;background:linear-gradient(90deg,#1048d8,#0020a8)"></div>
  <div class="a" style="left:0;top:202px;width:338px;height:3px;background:linear-gradient(#1a40c0,#001078)"></div>
  <div class="a" style="left:3px;top:29px;width:332px;height:173px;background:#ECE9D8;border-left:1px solid #dce8f4;border-bottom:1px solid #e4eef8"></div>
  <!-- LV icon -->
  <svg class="a" style="left:7px;top:8px" width="13" height="13" viewBox="0 0 13 13">
    <rect x="0" y="0" width="13" height="13" fill="#6a8ad8"/>
    <path d="M1 0.5 H12 M1 12.5 H12" stroke="#e8e8e8" stroke-width="1" stroke-dasharray="1 1"/>
    <rect x="0.5" y="1.5" width="12" height="10" fill="#101010"/>
    <path d="M1.5 2 V11 L11 6.5 Z" fill="#f0d830"/>
    <path d="M6 2.5 H12 V6 Z" fill="#208a20"/>
    <path d="M4 6.5 H7 M5.5 5 V8" stroke="#000" stroke-width="1.2"/>
  </svg>
  <!-- close -->
  <div class="a" style="left:312px;top:5px;width:21px;height:21px;border:1px solid #fff;border-radius:3px;background:radial-gradient(circle at 40% 35%,#f08060 0,#e05a30 40%,#c84018 100%)">
    <svg width="19" height="19" viewBox="0 0 19 19" style="position:absolute;left:0;top:0"><path d="M5 5 L14 14 M14 5 L5 14" stroke="#fff" stroke-width="2"/></svg>
  </div>
  <!-- error icon -->
  <svg class="a" style="left:13px;top:38px" width="31" height="31" viewBox="0 0 31 31">
    <defs><radialGradient id="eg" cx="0.42" cy="0.35" r="0.7"><stop offset="0" stop-color="#f06a48"/><stop offset="0.55" stop-color="#d83818"/><stop offset="1" stop-color="#902008"/></radialGradient></defs>
    <circle cx="15.5" cy="15.5" r="14.8" fill="url(#eg)"/>
    <path d="M9.5 9.5 L21.5 21.5 M21.5 9.5 L9.5 21.5" stroke="#fff" stroke-width="3.6"/>
  </svg>
  <div class="a" style="left:50px;top:41px;font-weight:bold;font-size:12px;line-height:13px;white-space:nowrap;letter-spacing:-0.05px">Fehler -1073807346 ist bei VISA: Öffnen in<br>Agilent 34401.lvlib:Initialize.vi-&gt;Einarbeitung<br>Sorensen&amp;HP34401&amp;Schleife.vi aufgetreten</div>
  <div class="a" style="left:14px;top:110px;font-weight:bold;font-size:11px;letter-spacing:0.3px;line-height:13px;white-space:nowrap">Mögliche Ursachen:</div>
  <div class="a" style="left:14px;top:136px;font-size:11px;line-height:13px;white-space:nowrap;letter-spacing:-0.1px">VISA:&nbsp; (Hex 0xBFFF000E) Die gegebene Session oder<br>Objektreferenz ist ungültig.</div>
  <div class="a" style="left:173px;top:169px;width:73px;height:21px;border:1px solid #003c74;border-radius:3px;background:linear-gradient(#fff,#f4f3ee 60%,#dcd8c8);font-size:11px;text-align:center;line-height:21px">
    <div class="a" style="left:1px;top:1px;right:1px;bottom:1px;border:1px solid #8fb0e8;border-radius:2px"></div>
    <div class="a" style="left:3px;top:3px;right:3px;bottom:3px;border:1px dotted #777"></div>
    <span style="position:relative">Fortfahren</span></div>
  <div class="a" style="left:251px;top:169px;width:73px;height:21px;border:1px solid #003c74;border-radius:3px;background:linear-gradient(#fff,#f4f3ee 60%,#dcd8c8);font-size:11px;text-align:center;line-height:21px">Stopp</div>
</div>
<svg class="a" style="left:0;top:0" width="922" height="623"><path d="M166 203.5 L185.5 197.5 L191.5 227.5 M183.5 202.5 L140 253" stroke="#c82838" stroke-width="1" fill="none"/></svg>
<div class="a" style="left:0;top:622px;width:922px;height:1px;background:#fff"></div>
</body></html>
